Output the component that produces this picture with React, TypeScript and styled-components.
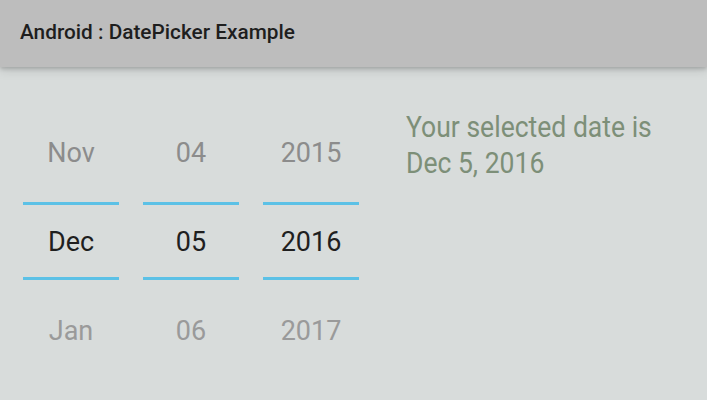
import React from "react";
import styled, { createGlobalStyle } from "styled-components";

const Global = createGlobalStyle`
  html, body { margin: 0; padding: 0; }
  body {
    width: 707px;
    height: 400px;
    overflow: hidden;
    background: #d8dcdb;
    font-family: Roboto, "Noto Sans", sans-serif;
  }
`;

const Screen = styled.div`
  width: 707px;
  height: 400px;
  display: flex;
  flex-direction: column;
  background: #d8dcdb;
`;

const Toolbar = styled.header`
  height: 67px;
  flex: none;
  display: flex;
  align-items: center;
  padding-left: 20px;
  background: #bdbdbd;
  box-shadow: 0 2px 4px rgba(0, 0, 0, 0.18), 0 4px 10px rgba(0, 0, 0, 0.1);
  position: relative;
  z-index: 1;
`;

const Title = styled.h1`
  margin: 0;
  font-family: Roboto, sans-serif;
  font-weight: 500;
  font-size: 20.8px;
  color: #1e1e1e;
  margin-top: -3px;
`;

const Content = styled.main`
  display: flex;
  flex-direction: row;
  padding-left: 23px;
`;

const Picker = styled.div`
  display: flex;
  gap: 24px;
  padding-top: 40px;
`;

const Column = styled.div`
  width: 96px;
  display: flex;
  flex-direction: column;
  align-items: stretch;
`;

const Item = styled.div<{ $fade?: boolean }>`
  height: 90px;
  box-sizing: border-box;
  padding-top: 2px;
  display: flex;
  align-items: center;
  justify-content: center;
  font-size: 27px;
  color: ${(p) => (p.$fade ? "#9a9a9a" : "#8c8c8c")};
`;

const Divider = styled.div<{ $top?: boolean }>`
  height: 3px;
  background: #5cc1e6;
  margin-top: ${(p) => (p.$top ? "5px" : "0")};
  margin-bottom: ${(p) => (p.$top ? "0" : "5px")};
`;

const Selected = styled.div`
  height: 72px;
  box-sizing: border-box;
  padding-top: 2px;
  display: flex;
  align-items: center;
  justify-content: center;
  font-size: 27px;
  color: #1f1f1f;
`;

const Result = styled.div`
  margin-left: 47px;
  padding-top: 42px;
  font-size: 29px;
  line-height: 36px;
  color: #7d8f78;
  transform: scaleX(0.915);
  transform-origin: left top;
  white-space: nowrap;
`;

const columns = [
  ["Nov", "Dec", "Jan"],
  ["04", "05", "06"],
  ["2015", "2016", "2017"],
];

export default function App() {
  return (
    <Screen>
      <Global />
      <Toolbar>
        <Title>Android : DatePicker Example</Title>
      </Toolbar>
      <Content>
        <Picker>
          {columns.map(([prev, cur, next]) => (
            <Column key={cur}>
              <Item>{prev}</Item>
              <Divider $top />
              <Selected>{cur}</Selected>
              <Divider />
              <Item $fade>{next}</Item>
            </Column>
          ))}
        </Picker>
        <Result>
          Your selected date is
          <br />
          Dec 5, 2016
        </Result>
      </Content>
    </Screen>
  );
}
